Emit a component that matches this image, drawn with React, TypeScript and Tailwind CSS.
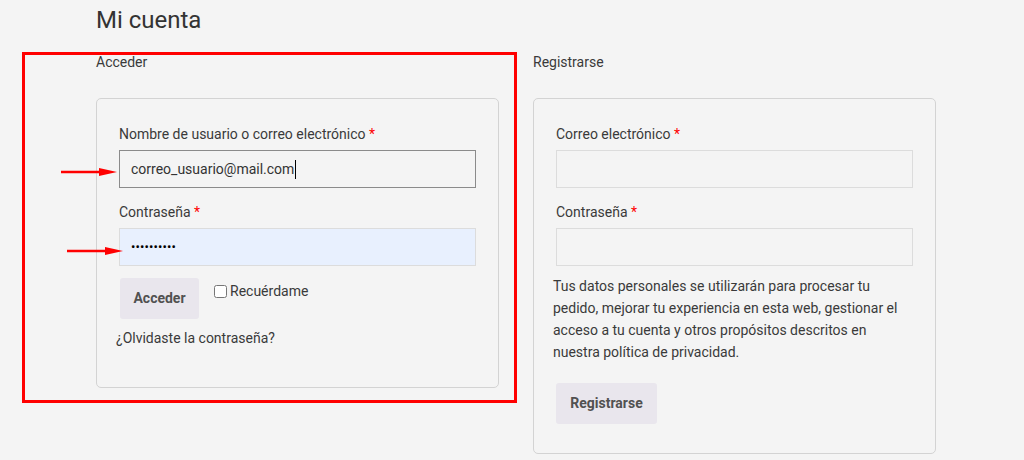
import React from 'react';

const font = { fontFamily: 'Roboto, "Noto Sans", sans-serif' };

function Label({ text }: { text: string }) {
  return (
    <div className="text-[14px] leading-[20px] text-[#3a3a3a]">
      {text} <span className="text-[#ff0000]">*</span>
    </div>
  );
}

function Arrow() {
  return (
    <svg width="58" height="10" viewBox="0 0 58 10">
      <line x1="0" y1="5" x2="42" y2="5" stroke="#f00" strokeWidth="2.4" />
      <polygon points="38,1 56,5 38,9" fill="#f00" />
    </svg>
  );
}

export default function App() {
  return (
    <div className="relative w-[1024px] h-[460px] overflow-hidden bg-[#f4f4f4] text-[#3a3a3a]" style={font}>
      <div className="pl-[96px] pt-[6px]">
        <h1 className="text-[24px] leading-[28px] text-[#333] font-normal">Mi cuenta</h1>

        <div className="flex gap-[34px] mt-[18px]">
          {/* Login */}
          <div className="w-[403px]">
            <h2 className="text-[14px] leading-[20px] font-normal">Acceder</h2>
            <div className="mt-[26px] h-[290px] border border-[#d3d3d3] rounded-[5px] pt-[25px] px-[22px]">
              <Label text="Nombre de usuario o correo electrónico" />
              <div className="mt-[6px] h-[38px] border border-[#8b8b8b] flex items-center pl-[11px] text-[14px] text-[#333]">
                correo_usuario@mail.com
                <span className="inline-block w-px h-[19px] bg-black ml-px" />
              </div>
              <div className="mt-[14px]">
                <Label text="Contraseña" />
              </div>
              <div className="mt-[6px] h-[38px] border border-[#dcdcdc] bg-[#e8f0fe] flex items-center pl-[11px] text-[13px] tracking-[0.1px] text-black">
                ••••••••••
              </div>
              <div className="mt-[12px] flex items-start gap-[15px] ml-px">
                <button className="w-[79px] h-[41px] rounded-[3px] bg-[#e9e6ed] text-[14px] font-bold text-[#515151]">
                  Acceder
                </button>
                <label className="flex items-center gap-[3px] mt-[5px] text-[14px] leading-[16px]">
                  <input type="checkbox" className="w-[13px] h-[13px] m-0" />
                  Recuérdame
                </label>
              </div>
              <div className="mt-[9px] -ml-[3px] text-[14px] leading-[20px]">¿Olvidaste la contraseña?</div>
            </div>
          </div>

          {/* Register */}
          <div className="w-[403px]">
            <h2 className="text-[14px] leading-[20px] font-normal">Registrarse</h2>
            <div className="mt-[26px] h-[356px] border border-[#d3d3d3] rounded-[5px] pt-[25px] px-[22px]">
              <Label text="Correo electrónico" />
              <div className="mt-[6px] h-[38px] border border-[#dcdcdc]" />
              <div className="mt-[14px]">
                <Label text="Contraseña" />
              </div>
              <div className="mt-[6px] h-[38px] border border-[#dcdcdc]" />
              <p className="mt-[9px] -ml-[3px] text-[14px] leading-[22px] whitespace-nowrap">
                Tus datos personales se utilizarán para procesar tu
                <br />
                pedido, mejorar tu experiencia en esta web, gestionar el
                <br />
                acceso a tu cuenta y otros propósitos descritos en
                <br />
                nuestra política de privacidad.
              </p>
              <button className="mt-[20px] w-[101px] h-[41px] rounded-[3px] bg-[#e9e6ed] text-[14px] font-bold text-[#515151]">
                Registrarse
              </button>
            </div>
          </div>
        </div>
      </div>

      {/* annotations */}
      <div className="absolute left-[22px] top-[52px] w-[495px] h-[351px] border-[3px] border-[#f00] pointer-events-none" />
      <div className="absolute left-[61px] top-[167px]">
        <Arrow />
      </div>
      <div className="absolute left-[67px] top-[246px]">
        <Arrow />
      </div>
    </div>
  );
}
